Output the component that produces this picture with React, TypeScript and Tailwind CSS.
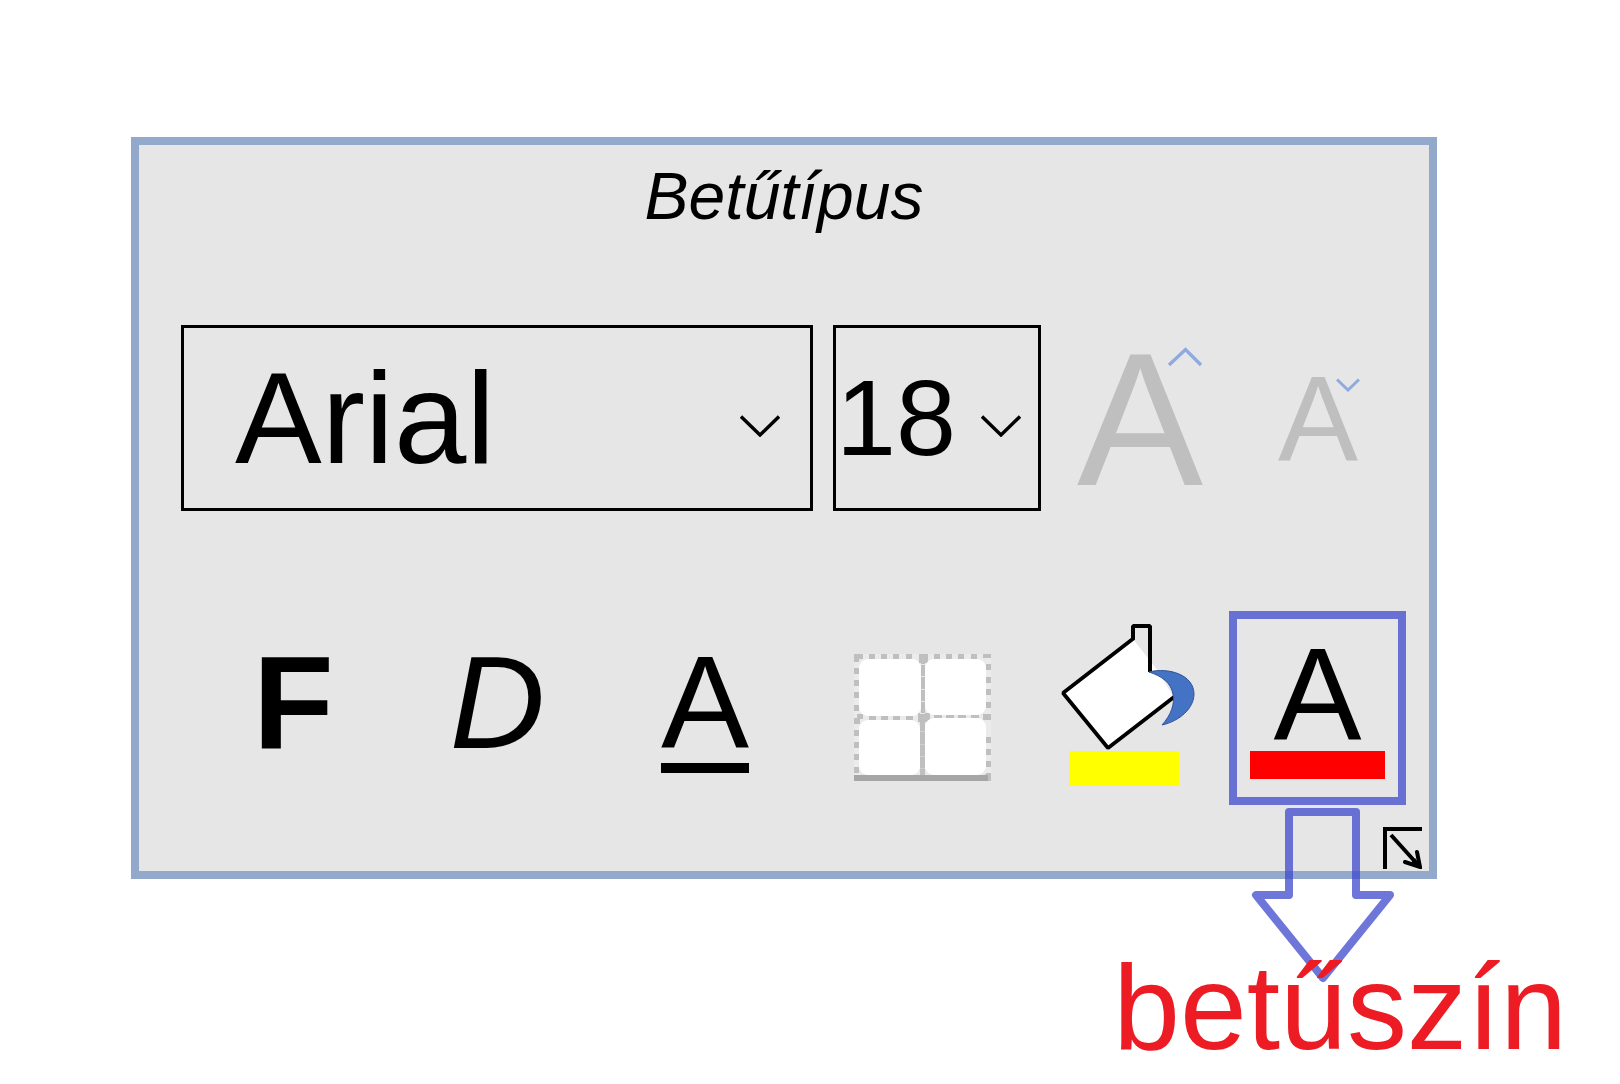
import React, { useState } from "react";

function Chevron({ className }: { className: string }) {
  return (
    <svg viewBox="0 0 40 22" className={className} fill="none" aria-hidden="true">
      <path d="M1 1.500 L20 20 L39 1.500" stroke="#000" strokeWidth="3.400" />
    </svg>
  );
}

function BordersIcon() {
  const topDots = [15, 27, 39, 52, 80, 92, 104, 117];
  const leftDots = [14, 26, 38, 51, 76, 88, 100, 113];
  const rightDots = [10, 23, 35, 48, 83, 95, 107, 119];
  return (
    <svg viewBox="0 0 137 127" className="block h-[127px] w-[137px]" aria-hidden="true">
      <rect width="137" height="127" fill="#ebebeb" />
      <g fill="#bfbfbf">
        <rect width="9" height="5" />
        <rect width="5" height="8" />
        <rect x="65" width="9" height="9" />
        <rect x="129" width="8" height="4" />
        {topDots.map((x) => (
          <rect key={x} x={x} width="6" height="5" />
        ))}
        {leftDots.map((y) => (
          <rect key={y} y={y} width="5" height="6" />
        ))}
        {rightDots.map((y) => (
          <rect key={y} x="132" y={y} width="5" height="6" />
        ))}
        <rect x="3" y="60" width="6" height="5" />
        <rect y="64" width="6" height="6" />
        {topDots.slice(0, 4).map((x) => (
          <rect key={x} x={x} y="62" width="7" height="4" />
        ))}
        {topDots.slice(4).map((x) => (
          <rect key={x} x={x} y="61" width="8" height="3" />
        ))}
        <rect x="64" y="59" width="12" height="9" />
        <rect x="129" y="60" width="8" height="6" />
        <rect x="67" y="9" width="4" height="51" />
        <rect x="66" y="66" width="5" height="55" />
        <rect x="131" y="120" width="6" height="7" />
      </g>
      <g fill="#e8e8e8">
        {[10, 22, 35, 47, 59].map((y) => (
          <rect key={y} x="66" y={y} width="5" height="1" />
        ))}
      </g>
      <g fill="#cfcfcf">
        {[77, 90, 102, 114].map((y) => (
          <rect key={y} x="66" y={y} width="5" height="1" />
        ))}
      </g>
      <g fill="#fff">
        <rect x="5" y="5" width="62" height="57" rx="9" />
        <rect x="71" y="5" width="61" height="56" rx="9" />
        <rect x="5" y="66" width="61" height="55" rx="9" />
        <rect x="71" y="64" width="61" height="57" rx="9" />
      </g>
      <rect y="121" width="134" height="6" fill="#a6a6a6" />
    </svg>
  );
}

function BucketIcon() {
  return (
    <svg viewBox="0 0 135 163" className="block h-[163px] w-[135px]" aria-hidden="true">
      <path d="M2 70 L72 16 L97 48 L112 73 L47 124 Z" fill="#fff" />
      <g fill="none" stroke="#000">
        <path d="M73 15 L2 70 L47 125 L113 74" strokeWidth="3.800" strokeLinejoin="bevel" />
        <path d="M72 16 V3 H89 V49" strokeWidth="4" strokeLinejoin="bevel" />
      </g>
      <path
        d="M88 49 C108 44 133 52 133 71 C133 85 119 98 101 102 C110 92 114 81 112 71 C110 60 101 53 88 49 Z"
        fill="#4472c4"
        stroke="#2f5597"
        strokeWidth="1"
      />
      <rect x="8" y="128" width="110" height="35" fill="#ff0" />
    </svg>
  );
}

function Letter({ children, className }: { children: React.ReactNode; className?: string }) {
  return <span className={`block text-[132px] leading-[112px] ${className ?? ""}`}>{children}</span>;
}

export default function App() {
  const [font, setFont] = useState("Arial");
  const [size, setSize] = useState("18");

  return (
    <main className="flex min-h-screen flex-col bg-white pt-[137px] font-['Liberation_Sans',Arial,sans-serif] text-black">
      <section
        aria-labelledby="group-title"
        className="mr-[183px] ml-[131px] flex flex-col border-8 border-[#92a9cc] bg-[#e6e6e6] pt-[15px]"
      >
        <h1 id="group-title" className="text-center text-[66px] leading-[72px] italic">
          Betűtípus
        </h1>

        <div className="mt-[93px] flex items-start pr-[71px] pl-[42px]">
          <div className="relative min-w-0 flex-1">
            <select
              aria-label="Betűtípus neve"
              value={font}
              onChange={(e) => setFont(e.target.value)}
              className="block h-[186px] w-full appearance-none rounded-none border-3 border-black bg-transparent pl-[51px] text-[130px] leading-none"
            >
              <option>Arial</option>
            </select>
            <Chevron className="pointer-events-none absolute right-[33px] bottom-[74px] h-[22px] w-10" />
          </div>
          <div className="relative ml-5 w-[208px]">
            <select
              aria-label="Betűméret"
              value={size}
              onChange={(e) => setSize(e.target.value)}
              className="block h-[186px] w-full appearance-none rounded-none border-3 border-black bg-transparent text-[108px] leading-none"
            >
              <option>18</option>
            </select>
            <Chevron className="pointer-events-none absolute right-5 bottom-[74px] h-[22px] w-10" />
          </div>
          <button
            aria-label="Betűméret növelése"
            className="relative ml-9 w-[126px] text-[189px] leading-[190px] text-[#bfbfbf]"
          >
            A
            <svg viewBox="0 0 36 20" className="absolute top-[22px] right-0 h-5 w-9" fill="none" aria-hidden="true">
              <path d="M2 18 L18.500 2.500 L34 18" stroke="#8faadc" strokeWidth="3.400" />
            </svg>
          </button>
          <button
            aria-label="Betűméret csökkentése"
            className="relative ml-[75px] w-20 text-[120px] leading-[186px] text-[#bfbfbf]"
          >
            A
            <svg viewBox="0 0 24 14" className="absolute top-[53px] -right-[2px] h-[14px] w-6" fill="none" aria-hidden="true">
              <path d="M1 1.500 L12 12 L23 1.500" stroke="#8faadc" strokeWidth="3" />
            </svg>
          </button>
        </div>

        <div className="mt-24 flex items-start pr-[23px] pl-[114px]">
          <div className="flex items-start gap-[116px] pt-9">
            <button aria-label="Félkövér">
              <Letter className="font-bold">F</Letter>
            </button>
            <button aria-label="Dőlt">
              <Letter className="italic">D</Letter>
            </button>
            <button aria-label="Aláhúzott">
              <Letter>A</Letter>
              <span className="mt-1 block h-[10px] bg-black" />
            </button>
          </div>
          <div className="ml-auto flex items-start">
            <button aria-label="Szegélyek" className="mt-[43px] mr-[70px]">
              <BordersIcon />
            </button>
            <button aria-label="Kitöltőszín" className="mt-3 mr-[33px]">
              <BucketIcon />
            </button>
            <div className="relative">
              <button
                aria-label="Betűszín"
                className="flex h-[194px] w-[177px] flex-col items-center border-8 border-[#6870d4] pt-5"
              >
                <Letter>A</Letter>
                <span className="block h-7 w-[135px] bg-[#f00]" />
              </button>
              <svg
                viewBox="0 0 146 176"
                className="pointer-events-none absolute top-full left-5 mt-[3px] h-[176px] w-[146px]"
                fill="none"
                aria-hidden="true"
              >
                <path
                  d="M40 4 H107 V87 H141 L74 170 L7 87 H40 Z"
                  stroke="#3f48cc"
                  strokeOpacity="0.75"
                  strokeWidth="8"
                  strokeLinejoin="round"
                />
              </svg>
            </div>
          </div>
        </div>

        <button aria-label="Betűtípus beállításai" className="mt-[22px] mr-[7px] mb-[2px] self-end">
          <svg viewBox="0 0 39 42" className="block h-[42px] w-[39px]" fill="none" stroke="#000" aria-hidden="true">
            <path d="M2 42 V2 H39" strokeWidth="4" />
            <path d="M8 8 L36 39" strokeWidth="4" />
            <path d="M34 25 L37 40 L22 35" strokeWidth="4" strokeLinecap="round" />
            <path d="M32 31 L39 42 L27 37 Z" fill="#000" stroke="none" />
          </svg>
        </button>
      </section>

      <p className="relative z-10 mt-[68px] mr-[53px] self-end text-[120px] leading-[120px] text-[#ed1c24]">betűszín</p>
    </main>
  );
}
